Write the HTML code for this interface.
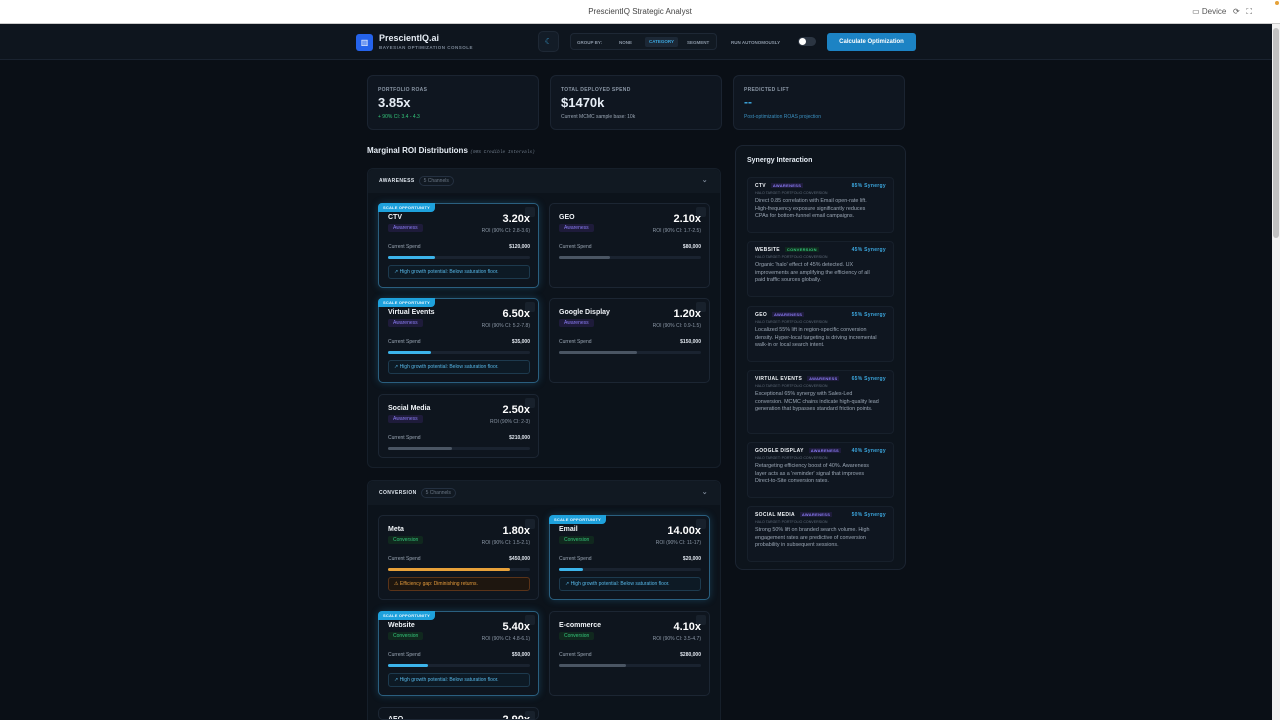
<!DOCTYPE html>
<html style="width:1280px;height:720px;overflow:hidden"><head><meta charset="utf-8"><style>
*{box-sizing:border-box;margin:0;padding:0}
body{width:1280px;height:720px;overflow:hidden;background:#0a0f16;font-family:"Liberation Sans",sans-serif;color:#e6edf5;position:relative}
.a{position:absolute}
.top{left:0;top:0;width:1280px;height:24px;background:#fff;border-bottom:1px solid #ccc;color:#444;font-size:8px;text-align:center;line-height:24px}
.hdr{left:0;top:24px;width:1272px;height:36px;background:#0e151e;border-bottom:1px solid #1a2330}
.card{background:#0f1620;border:1px solid #1b2431;border-radius:6px}
.lbl{font-size:5px;font-weight:bold;color:#8b97a6;letter-spacing:.3px}
.ch{background:#0e151e;border:1px solid #1c2633;border-radius:5px;width:161px;height:85px;overflow:hidden}
.ch.hl{border-color:#2a5f7f;box-shadow:0 0 8px rgba(56,170,230,.25);overflow:visible}
.ch .n{position:absolute;left:9px;top:10px;font-size:7px;font-weight:bold;color:#f0f4f8}
.ch .t{position:absolute;left:9px;top:20px;font-size:5px;padding:1px 5px;border-radius:2px}
.aw{color:#8b7cf6;background:#1e1b3a}
.cv{color:#34c77b;background:#10281e}
.ch .r{position:absolute;right:8px;top:9px;font-size:11px;font-weight:bold;color:#fff}
.ch .ci{position:absolute;right:8px;top:24px;font-size:5px;color:#8b97a6}
.ch .sp{position:absolute;left:9px;top:40px;font-size:5px;color:#9aa6b4}
.ch .sv{position:absolute;right:8px;top:40px;font-size:5px;color:#e0e6ee;font-weight:bold}
.ch .bar{position:absolute;left:9px;right:8px;top:52px;height:3px;background:#1a2330;border-radius:2px}
.ch .bar i{display:block;height:3px;border-radius:2px}
.ch .msg{position:absolute;left:9px;right:8px;top:61px;height:14px;border:1px solid #1d3a4e;background:#0d1a25;border-radius:3px;font-size:5px;color:#56b6e6;line-height:12px;padding-left:5px}
.ch .msg.w{border-color:#5a3318;background:#1e160f;color:#e39a3b}
.ch .badge{position:absolute;left:-1px;top:-1px;background:#1ea1dc;color:#e8f6ff;font-size:4px;font-weight:bold;padding:2px 5px;border-radius:4px 0 4px 0;letter-spacing:.2px}
.ch .ic{position:absolute;right:3px;top:3px;width:10px;height:10px;background:#18212c;border-radius:2px}
.grp{border:1px solid #161f2a;border-radius:6px;background:#0c131b}
.gh{height:24px;background:#111922;border-radius:6px 6px 0 0;font-size:5px;font-weight:bold;color:#dfe6ee;letter-spacing:.4px;line-height:24px;padding-left:11px}
.gh span{font-weight:normal;color:#6b7785;border:1px solid #243040;border-radius:6px;padding:1px 4px;margin-left:4px;letter-spacing:0}
.gh b{position:absolute;right:12px;top:0;color:#7b8796;font-size:7px}
.syn{left:747px;width:147px;background:#0f1620;border:1px solid #17202b;border-radius:4px;padding:5px 7px}
.syn .h{font-size:5px;font-weight:bold;color:#eef2f6;letter-spacing:.3px}
.syn .h em{font-style:normal;font-size:4px;margin-left:5px;padding:0 2px}
.syn .h u{text-decoration:none;float:right;color:#3ca8e0;font-size:5px}
.syn .s{font-size:3.6px;color:#5f6b79;margin-top:2px}
.syn .p{font-size:5.4px;color:#9aa6b4;line-height:7.5px;margin-top:3px;padding-right:6px}
</style></head><body>
<div class="a top">PrescientIQ Strategic Analyst<span class="a" style="right:28px;top:0;color:#555">▭ Device &nbsp; ⟳ &nbsp; ⛶</span></div>
<div class="a" style="left:1275px;top:1px;width:4px;height:4px;background:#e5a23a;border-radius:2px"></div>
<div class="a hdr">
 <div class="a" style="left:356px;top:10px;width:17px;height:17px;background:#2563eb;border-radius:3px;color:#fff;font-size:8px;text-align:center;line-height:17px">▥</div>
 <div class="a" style="left:379px;top:9px;font-size:9px;font-weight:bold">PrescientIQ.ai</div>
 <div class="a" style="left:379px;top:21px;font-size:4.5px;font-weight:bold;color:#7b8796;letter-spacing:.5px">BAYESIAN OPTIMIZATION CONSOLE</div>
 <div class="a" style="left:538px;top:7px;width:21px;height:21px;background:#131c27;border:1px solid #1e2835;border-radius:5px;color:#3ca8e0;font-size:8px;text-align:center;line-height:19px">☾</div>
 <div class="a" style="left:570px;top:9px;width:147px;height:17px;background:#111922;border:1px solid #1e2835;border-radius:4px;font-size:4.5px;font-weight:bold;color:#8b97a6">
  <span class="a" style="left:6px;top:6px">GROUP BY:</span><span class="a" style="left:48px;top:6px">NONE</span>
  <span class="a" style="left:74px;top:3px;width:33px;height:10px;background:#1c2836;border-radius:2px;color:#3ca8e0;text-align:center;line-height:10px">CATEGORY</span>
  <span class="a" style="left:116px;top:6px">SEGMENT</span></div>
 <div class="a" style="left:731px;top:16px;font-size:4.5px;font-weight:bold;color:#8b97a6">RUN AUTONOMOUSLY</div>
 <div class="a" style="left:798px;top:13px;width:18px;height:9px;background:#2b3542;border-radius:5px"><div class="a" style="left:1px;top:1px;width:7px;height:7px;background:#fff;border-radius:4px"></div></div>
 <div class="a" style="left:827px;top:9px;width:89px;height:18px;background:#1c83c4;border-radius:3px;font-size:6px;font-weight:bold;color:#fff;text-align:center;line-height:18px">Calculate Optimization</div>
</div>
<div class="a" style="left:1272px;top:24px;width:8px;height:696px;background:#f1f1f1"><div style="margin:4px 1px;height:210px;background:#c1c1c1;border-radius:3px"></div></div>

<div class="a card" style="left:367px;top:75px;width:172px;height:55px"><div class="a lbl" style="left:10px;top:11px">PORTFOLIO ROAS</div><div class="a" style="left:10px;top:19px;font-size:13px;font-weight:bold">3.85x</div><div class="a" style="left:10px;top:38px;font-size:5px;color:#34c77b">+ 90% CI: 3.4 - 4.3</div></div>
<div class="a card" style="left:550px;top:75px;width:172px;height:55px"><div class="a lbl" style="left:10px;top:11px">TOTAL DEPLOYED SPEND</div><div class="a" style="left:10px;top:19px;font-size:13px;font-weight:bold">$1470k</div><div class="a" style="left:10px;top:38px;font-size:5px;color:#9aa6b4">Current MCMC sample base: 10k</div></div>
<div class="a card" style="left:733px;top:75px;width:172px;height:55px"><div class="a lbl" style="left:10px;top:11px">PREDICTED LIFT</div><div class="a" style="left:10px;top:19px;font-size:12px;font-weight:bold;color:#3ca8e0">--</div><div class="a" style="left:10px;top:38px;font-size:5px;color:#3a8fbf">Post-optimization ROAS projection</div></div>

<div class="a" style="left:367px;top:146px;font-size:8px;font-weight:bold">Marginal ROI Distributions <span style="font-family:'Liberation Mono',monospace;font-style:italic;font-weight:normal;font-size:4.5px;color:#6b7785">(90% Credible Intervals)</span></div>

<div class="a grp" style="left:367px;top:168px;width:354px;height:300px"><div class="gh a" style="left:0;top:0;width:352px">AWARENESS<span>5 Channels</span><b>⌄</b></div></div>
<div class="a grp" style="left:367px;top:480px;width:354px;height:260px"><div class="gh a" style="left:0;top:0;width:352px">CONVERSION<span>5 Channels</span><b>⌄</b></div></div>

<div class="a ch hl" style="left:378px;top:203px"><div class="badge">SCALE OPPORTUNITY</div><div class="ic"></div><div class="n">CTV</div><div class="t aw">Awareness</div><div class="r">3.20x</div><div class="ci">ROI (90% CI: 2.8-3.6)</div><div class="sp">Current Spend</div><div class="sv">$120,000</div><div class="bar"><i style="width:33%;background:#3cb4ea"></i></div><div class="msg">↗ High growth potential: Below saturation floor.</div></div>
<div class="a ch" style="left:549px;top:203px"><div class="ic"></div><div class="n">GEO</div><div class="t aw">Awareness</div><div class="r">2.10x</div><div class="ci">ROI (90% CI: 1.7-2.5)</div><div class="sp">Current Spend</div><div class="sv">$80,000</div><div class="bar"><i style="width:36%;background:#4a5563"></i></div></div>
<div class="a ch hl" style="left:378px;top:298px"><div class="badge">SCALE OPPORTUNITY</div><div class="ic"></div><div class="n">Virtual Events</div><div class="t aw">Awareness</div><div class="r">6.50x</div><div class="ci">ROI (90% CI: 5.2-7.8)</div><div class="sp">Current Spend</div><div class="sv">$35,000</div><div class="bar"><i style="width:30%;background:#3cb4ea"></i></div><div class="msg">↗ High growth potential: Below saturation floor.</div></div>
<div class="a ch" style="left:549px;top:298px"><div class="ic"></div><div class="n">Google Display</div><div class="t aw">Awareness</div><div class="r">1.20x</div><div class="ci">ROI (90% CI: 0.9-1.5)</div><div class="sp">Current Spend</div><div class="sv">$150,000</div><div class="bar"><i style="width:55%;background:#4a5563"></i></div></div>
<div class="a ch" style="left:378px;top:394px;height:64px"><div class="ic"></div><div class="n">Social Media</div><div class="t aw">Awareness</div><div class="r">2.50x</div><div class="ci">ROI (90% CI: 2-3)</div><div class="sp">Current Spend</div><div class="sv">$210,000</div><div class="bar"><i style="width:45%;background:#4a5563"></i></div></div>

<div class="a ch" style="left:378px;top:515px"><div class="ic"></div><div class="n">Meta</div><div class="t cv">Conversion</div><div class="r">1.80x</div><div class="ci">ROI (90% CI: 1.5-2.1)</div><div class="sp">Current Spend</div><div class="sv">$450,000</div><div class="bar"><i style="width:86%;background:#e8a13a"></i></div><div class="msg w">⚠ Efficiency gap: Diminishing returns.</div></div>
<div class="a ch hl" style="left:549px;top:515px"><div class="badge">SCALE OPPORTUNITY</div><div class="ic"></div><div class="n">Email</div><div class="t cv">Conversion</div><div class="r">14.00x</div><div class="ci">ROI (90% CI: 11-17)</div><div class="sp">Current Spend</div><div class="sv">$20,000</div><div class="bar"><i style="width:17%;background:#3cb4ea"></i></div><div class="msg">↗ High growth potential: Below saturation floor.</div></div>
<div class="a ch hl" style="left:378px;top:611px"><div class="badge">SCALE OPPORTUNITY</div><div class="ic"></div><div class="n">Website</div><div class="t cv">Conversion</div><div class="r">5.40x</div><div class="ci">ROI (90% CI: 4.8-6.1)</div><div class="sp">Current Spend</div><div class="sv">$50,000</div><div class="bar"><i style="width:28%;background:#3cb4ea"></i></div><div class="msg">↗ High growth potential: Below saturation floor.</div></div>
<div class="a ch" style="left:549px;top:611px"><div class="ic"></div><div class="n">E-commerce</div><div class="t cv">Conversion</div><div class="r">4.10x</div><div class="ci">ROI (90% CI: 3.5-4.7)</div><div class="sp">Current Spend</div><div class="sv">$280,000</div><div class="bar"><i style="width:47%;background:#4a5563"></i></div></div>
<div class="a ch" style="left:378px;top:707px;height:13px"><div class="ic"></div><div class="n" style="top:8px">AEO</div><div class="r" style="top:6px">2.90x</div></div>

<div class="a card" style="left:735px;top:145px;width:171px;height:425px;border-radius:8px;background:#0d141c"><div class="a" style="left:11px;top:11px;font-size:7px;font-weight:bold">Synergy Interaction</div></div>
<div class="a syn" style="top:177px;height:56px"><div class="h">CTV<em class="aw">AWARENESS</em><u>85% Synergy</u></div><div class="s">HALO TARGET: PORTFOLIO CONVERSION</div><div class="p">Direct 0.85 correlation with Email open-rate lift. High-frequency exposure significantly reduces CPAs for bottom-funnel email campaigns.</div></div>
<div class="a syn" style="top:241px;height:56px"><div class="h">WEBSITE<em class="cv">CONVERSION</em><u>45% Synergy</u></div><div class="s">HALO TARGET: PORTFOLIO CONVERSION</div><div class="p">Organic 'halo' effect of 45% detected. UX improvements are amplifying the efficiency of all paid traffic sources globally.</div></div>
<div class="a syn" style="top:306px;height:56px"><div class="h">GEO<em class="aw">AWARENESS</em><u>55% Synergy</u></div><div class="s">HALO TARGET: PORTFOLIO CONVERSION</div><div class="p">Localized 55% lift in region-specific conversion density. Hyper-local targeting is driving incremental walk-in or local search intent.</div></div>
<div class="a syn" style="top:370px;height:64px"><div class="h">VIRTUAL EVENTS<em class="aw">AWARENESS</em><u>65% Synergy</u></div><div class="s">HALO TARGET: PORTFOLIO CONVERSION</div><div class="p">Exceptional 65% synergy with Sales-Led conversion. MCMC chains indicate high-quality lead generation that bypasses standard friction points.</div></div>
<div class="a syn" style="top:442px;height:56px"><div class="h">GOOGLE DISPLAY<em class="aw">AWARENESS</em><u>40% Synergy</u></div><div class="s">HALO TARGET: PORTFOLIO CONVERSION</div><div class="p">Retargeting efficiency boost of 40%. Awareness layer acts as a 'reminder' signal that improves Direct-to-Site conversion rates.</div></div>
<div class="a syn" style="top:506px;height:56px"><div class="h">SOCIAL MEDIA<em class="aw">AWARENESS</em><u>50% Synergy</u></div><div class="s">HALO TARGET: PORTFOLIO CONVERSION</div><div class="p">Strong 50% lift on branded search volume. High engagement rates are predictive of conversion probability in subsequent sessions.</div></div>
</body></html>
